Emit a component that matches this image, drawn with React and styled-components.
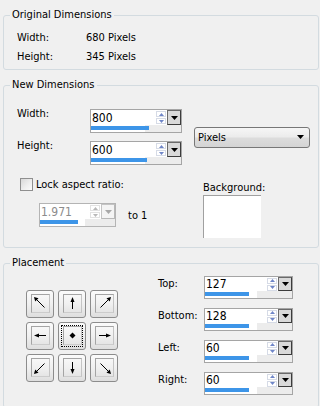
import React from "react";
import styled, { createGlobalStyle } from "styled-components";

const GlobalStyle = createGlobalStyle`
  html, body {
    margin: 0;
    padding: 0;
    background: #f0f0f0;
  }
  body {
    font-family: "DejaVu Sans Condensed", "DejaVu Sans", Tahoma, sans-serif;
    font-stretch: condensed;
    font-size: 11px;
    color: #000;
  }
`;

const Panel = styled.div`
  width: 320px;
  height: 406px;
  overflow: hidden;
  box-sizing: border-box;
  padding: 9px 1px 0 3px;
  display: flex;
  flex-direction: column;
  gap: 9px;
`;

const Group = styled.fieldset`
  margin: 0;
  padding: 0;
  min-width: 0;
  border: 1px solid #d3dbe0;
  border-radius: 3px;
`;

const Legend = styled.legend`
  margin-left: 6px;
  padding: 0 2px;
  line-height: 12px;
`;

const Body = styled.div`
  padding: ${(p) => p.$pad};
`;

const InfoGrid = styled.div`
  display: grid;
  grid-template-columns: 69px auto;
  grid-auto-rows: 19px;
  align-items: center;
`;

const Label = styled.span`
  line-height: 12px;
  align-self: start;
  margin-top: ${(p) => p.$top || 0}px;
  white-space: nowrap;
`;

const TopRow = styled.div`
  display: flex;
  align-items: center;
`;

const SizeGrid = styled.div`
  display: grid;
  grid-template-columns: 73px 92px;
  row-gap: 8px;
`;

const UnitSelect = styled.div`
  margin-left: 12px;
  width: 116px;
  height: 21px;
  box-sizing: border-box;
  border: 1px solid #777;
  border-radius: 3px;
  background: linear-gradient(#f6f6f6 0%, #ececec 45%, #dcdcdc 55%, #d4d4d4 100%);
  display: flex;
  align-items: center;
  justify-content: space-between;
  padding: 0 5px 0 3px;
  font-size: 11px;
`;

const BottomRow = styled.div`
  display: flex;
  margin-top: 13px;
`;

const LockCol = styled.div`
  width: 186px;
`;

const CheckRow = styled.label`
  display: flex;
  align-items: center;
  gap: 3px;
  margin-left: 3px;
  line-height: 13px;
`;

const CheckBox = styled.span`
  width: 13px;
  height: 13px;
  box-sizing: border-box;
  border: 1px solid #8f8f8f;
  background: linear-gradient(135deg, #d8d8d8 0%, #eeeeee 55%, #fbfbfb 100%);
`;

const RatioRow = styled.div`
  display: flex;
  align-items: center;
  gap: 12px;
  margin: 12px 0 0 22px;
`;

const BgCol = styled.div`
  display: flex;
  flex-direction: column;
  gap: 1px;
  padding-top: 3px;
  line-height: 13px;
`;

const Swatch = styled.div`
  width: 58px;
  height: 43px;
  box-sizing: border-box;
  background: #fff;
  border-top: 1px solid #a0a0a0;
  border-left: 1px solid #a0a0a0;
`;

const PlaceRow = styled.div`
  display: flex;
  align-items: center;
  gap: 40px;
`;

const PadGrid = styled.div`
  display: grid;
  grid-template-columns: repeat(3, 28px);
  grid-auto-rows: 28px;
  gap: 4px;
`;

const PadButton = styled.button`
  all: unset;
  box-sizing: border-box;
  width: 28px;
  height: 28px;
  border: 1px solid #8c8c8c;
  border-radius: 3px;
  background: linear-gradient(#fbfbfb 0%, #f0f0f0 50%, #dedede 100%);
  display: flex;
  align-items: center;
  justify-content: center;
  position: relative;
`;

const PadInner = styled.span`
  width: 19px;
  height: 19px;
  box-sizing: border-box;
  border: 1px solid #a4a4a4;
  border-right-color: #c4c4c4;
  border-bottom-color: #cccccc;
  display: flex;
  align-items: center;
  justify-content: center;
`;

const FocusRing = styled.span`
  position: absolute;
  inset: 2px;
  border: 1px dotted #000;
`;

const FieldGrid = styled.div`
  display: grid;
  grid-template-columns: 46px 89px;
  row-gap: 9px;
`;

/* spin field */

const Spin = styled.div`
  width: ${(p) => p.$w}px;
  height: ${(p) => p.$h}px;
  box-sizing: border-box;
  border: 1px solid ${(p) => (p.$disabled ? "#b4b4b4" : "#a5a5a5")};
  background: #fff;
  display: flex;
  flex-direction: column;
`;

const SpinTop = styled.div`
  flex: 1;
  display: flex;
  align-items: stretch;
  min-height: 0;
`;

const SpinValue = styled.span`
  flex: 1;
  padding-left: 1px;
  font-size: 12px;
  line-height: ${(p) => p.$line}px;
  color: ${(p) => (p.$disabled ? "#8c8c8c" : "#000")};
`;

const Arrows = styled.span`
  width: 10px;
  display: flex;
  flex-direction: column;
  justify-content: center;
  gap: 1px;
  margin-right: 1px;
`;

const ArrowCell = styled.span`
  height: 6px;
  box-sizing: border-box;
  border: 1px solid ${(p) => (p.$disabled ? "#e2e2e2" : "#d6dbe6")};
  display: flex;
  align-items: center;
  justify-content: center;
`;

const DropBtn = styled.span`
  width: 14px;
  box-sizing: border-box;
  border: 1px solid ${(p) => (p.$disabled ? "#c4c4c4" : "#6a6a6a")};
  border-right-color: ${(p) => (p.$disabled ? "#b8b8b8" : "#3c3c3c")};
  border-bottom-color: ${(p) => (p.$disabled ? "#b8b8b8" : "#3c3c3c")};
  background: ${(p) => (p.$disabled ? "#f4f4f4" : "#d9d9d9")};
  display: flex;
  align-items: center;
  justify-content: center;
`;

const BarTrack = styled.div`
  height: 7px;
  box-sizing: border-box;
  padding: 1px 0 2px;
  background: linear-gradient(90deg, #fff 0%, #fff 60%, #ececec 60%);
`;

const BarFill = styled.div`
  height: 100%;
  background: #3d95e8;
`;

const Tri = ({ up, color = "#000", w = 7, h = 4 }) => (
  <svg width={w} height={h} viewBox={`0 0 ${w} ${h}`}>
    <polygon
      points={up ? `0,${h} ${w},${h} ${w / 2},0` : `0,0 ${w},0 ${w / 2},${h}`}
      fill={color}
    />
  </svg>
);

const SpinField = ({ value, pct, w = 92, h = 24, line = 16, disabled }) => (
  <Spin $w={w} $h={h} $disabled={disabled}>
    <SpinTop>
      <SpinValue $line={line} $disabled={disabled}>
        {value}
      </SpinValue>
      <Arrows>
        <ArrowCell $disabled={disabled}>
          <Tri up w={5} h={3} color={disabled ? "#b8b8b8" : "#6f86c8"} />
        </ArrowCell>
        <ArrowCell $disabled={disabled}>
          <Tri w={5} h={3} color={disabled ? "#b8b8b8" : "#6f86c8"} />
        </ArrowCell>
      </Arrows>
      <DropBtn $disabled={disabled}>
        <Tri color={disabled ? "#a8a8a8" : "#000"} />
      </DropBtn>
    </SpinTop>
    <BarTrack>
      <BarFill style={{ width: `${pct}%` }} />
    </BarTrack>
  </Spin>
);

// arrow shafts and heads, drawn in a 17x17 box inside the inset square
const arrowPaths = {
  nw: { line: "M3 3 L12.5 12.5", head: "2,2 6.5,3.2 3.2,6.5" },
  n: { line: "M8.5 4 L8.5 14", head: "8.5,2 6.5,7 10.5,7" },
  ne: { line: "M14 3 L4.5 12.5", head: "15,2 10.5,3.2 13.8,6.5" },
  w: { line: "M4 8.5 L14 8.5", head: "2,8.5 7,6.5 7,10.5" },
  e: { line: "M3 8.5 L13 8.5", head: "15,8.5 10,6.5 10,10.5" },
  sw: { line: "M3 14 L12.5 4.5", head: "2,15 3.2,10.5 6.5,13.8" },
  s: { line: "M8.5 3 L8.5 13", head: "8.5,15 6.5,10 10.5,10" },
  se: { line: "M4.5 4.5 L14 14", head: "15,15 10.5,13.8 13.8,10.5" },
};

const PadIcon = ({ dir }) => (
  <svg width="17" height="17" viewBox="0 0 17 17">
    {dir === "c" ? (
      <polygon points="8.5,5.5 11.5,8.5 8.5,11.5 5.5,8.5" fill="#000" />
    ) : (
      <>
        <path d={arrowPaths[dir].line} stroke="#000" strokeWidth="1" fill="none" />
        <polygon points={arrowPaths[dir].head} fill="#000" />
      </>
    )}
  </svg>
);

const padDirs = ["nw", "n", "ne", "w", "c", "e", "sw", "s", "se"];

const margins = [
  ["Top:", "127"],
  ["Bottom:", "128"],
  ["Left:", "60"],
  ["Right:", "60"],
];

export default function App() {
  return (
    <>
      <GlobalStyle />
      <Panel>
        <Group>
          <Legend>Original Dimensions</Legend>
          <Body $pad="7px 0 3px 13px">
            <InfoGrid>
              <span>Width:</span>
              <span>680 Pixels</span>
              <span>Height:</span>
              <span>345 Pixels</span>
            </InfoGrid>
          </Body>
        </Group>

        <Group>
          <Legend>New Dimensions</Legend>
          <Body $pad="18px 0 9px 13px">
            <TopRow>
              <SizeGrid>
                <Label $top={-1}>Width:</Label>
                <SpinField value="800" pct={64} />
                <Label $top={-1}>Height:</Label>
                <SpinField value="600" pct={62} />
              </SizeGrid>
              <UnitSelect>
                <span>Pixels</span>
                <Tri />
              </UnitSelect>
            </TopRow>
            <BottomRow>
              <LockCol>
                <CheckRow>
                  <CheckBox />
                  <span>Lock aspect ratio:</span>
                </CheckRow>
                <RatioRow>
                  <SpinField value="1.971" pct={50} w={77} disabled />
                  <span>to 1</span>
                </RatioRow>
              </LockCol>
              <BgCol>
                <span>Background:</span>
                <Swatch />
              </BgCol>
            </BottomRow>
          </Body>
        </Group>

        <Group>
          <Legend>Placement</Legend>
          <Body $pad="7px 0 12px 22px">
            <PlaceRow>
              <PadGrid>
                {padDirs.map((d) => (
                  <PadButton key={d}>
                    {d === "c" && <FocusRing />}
                    <PadInner>
                      <PadIcon dir={d} />
                    </PadInner>
                  </PadButton>
                ))}
              </PadGrid>
              <FieldGrid>
                {margins.map(([label, value]) => (
                  <React.Fragment key={label}>
                    <Label $top={2}>{label}</Label>
                    <SpinField value={value} pct={51} w={89} h={23} line={15} />
                  </React.Fragment>
                ))}
              </FieldGrid>
            </PlaceRow>
          </Body>
        </Group>
      </Panel>
    </>
  );
}
